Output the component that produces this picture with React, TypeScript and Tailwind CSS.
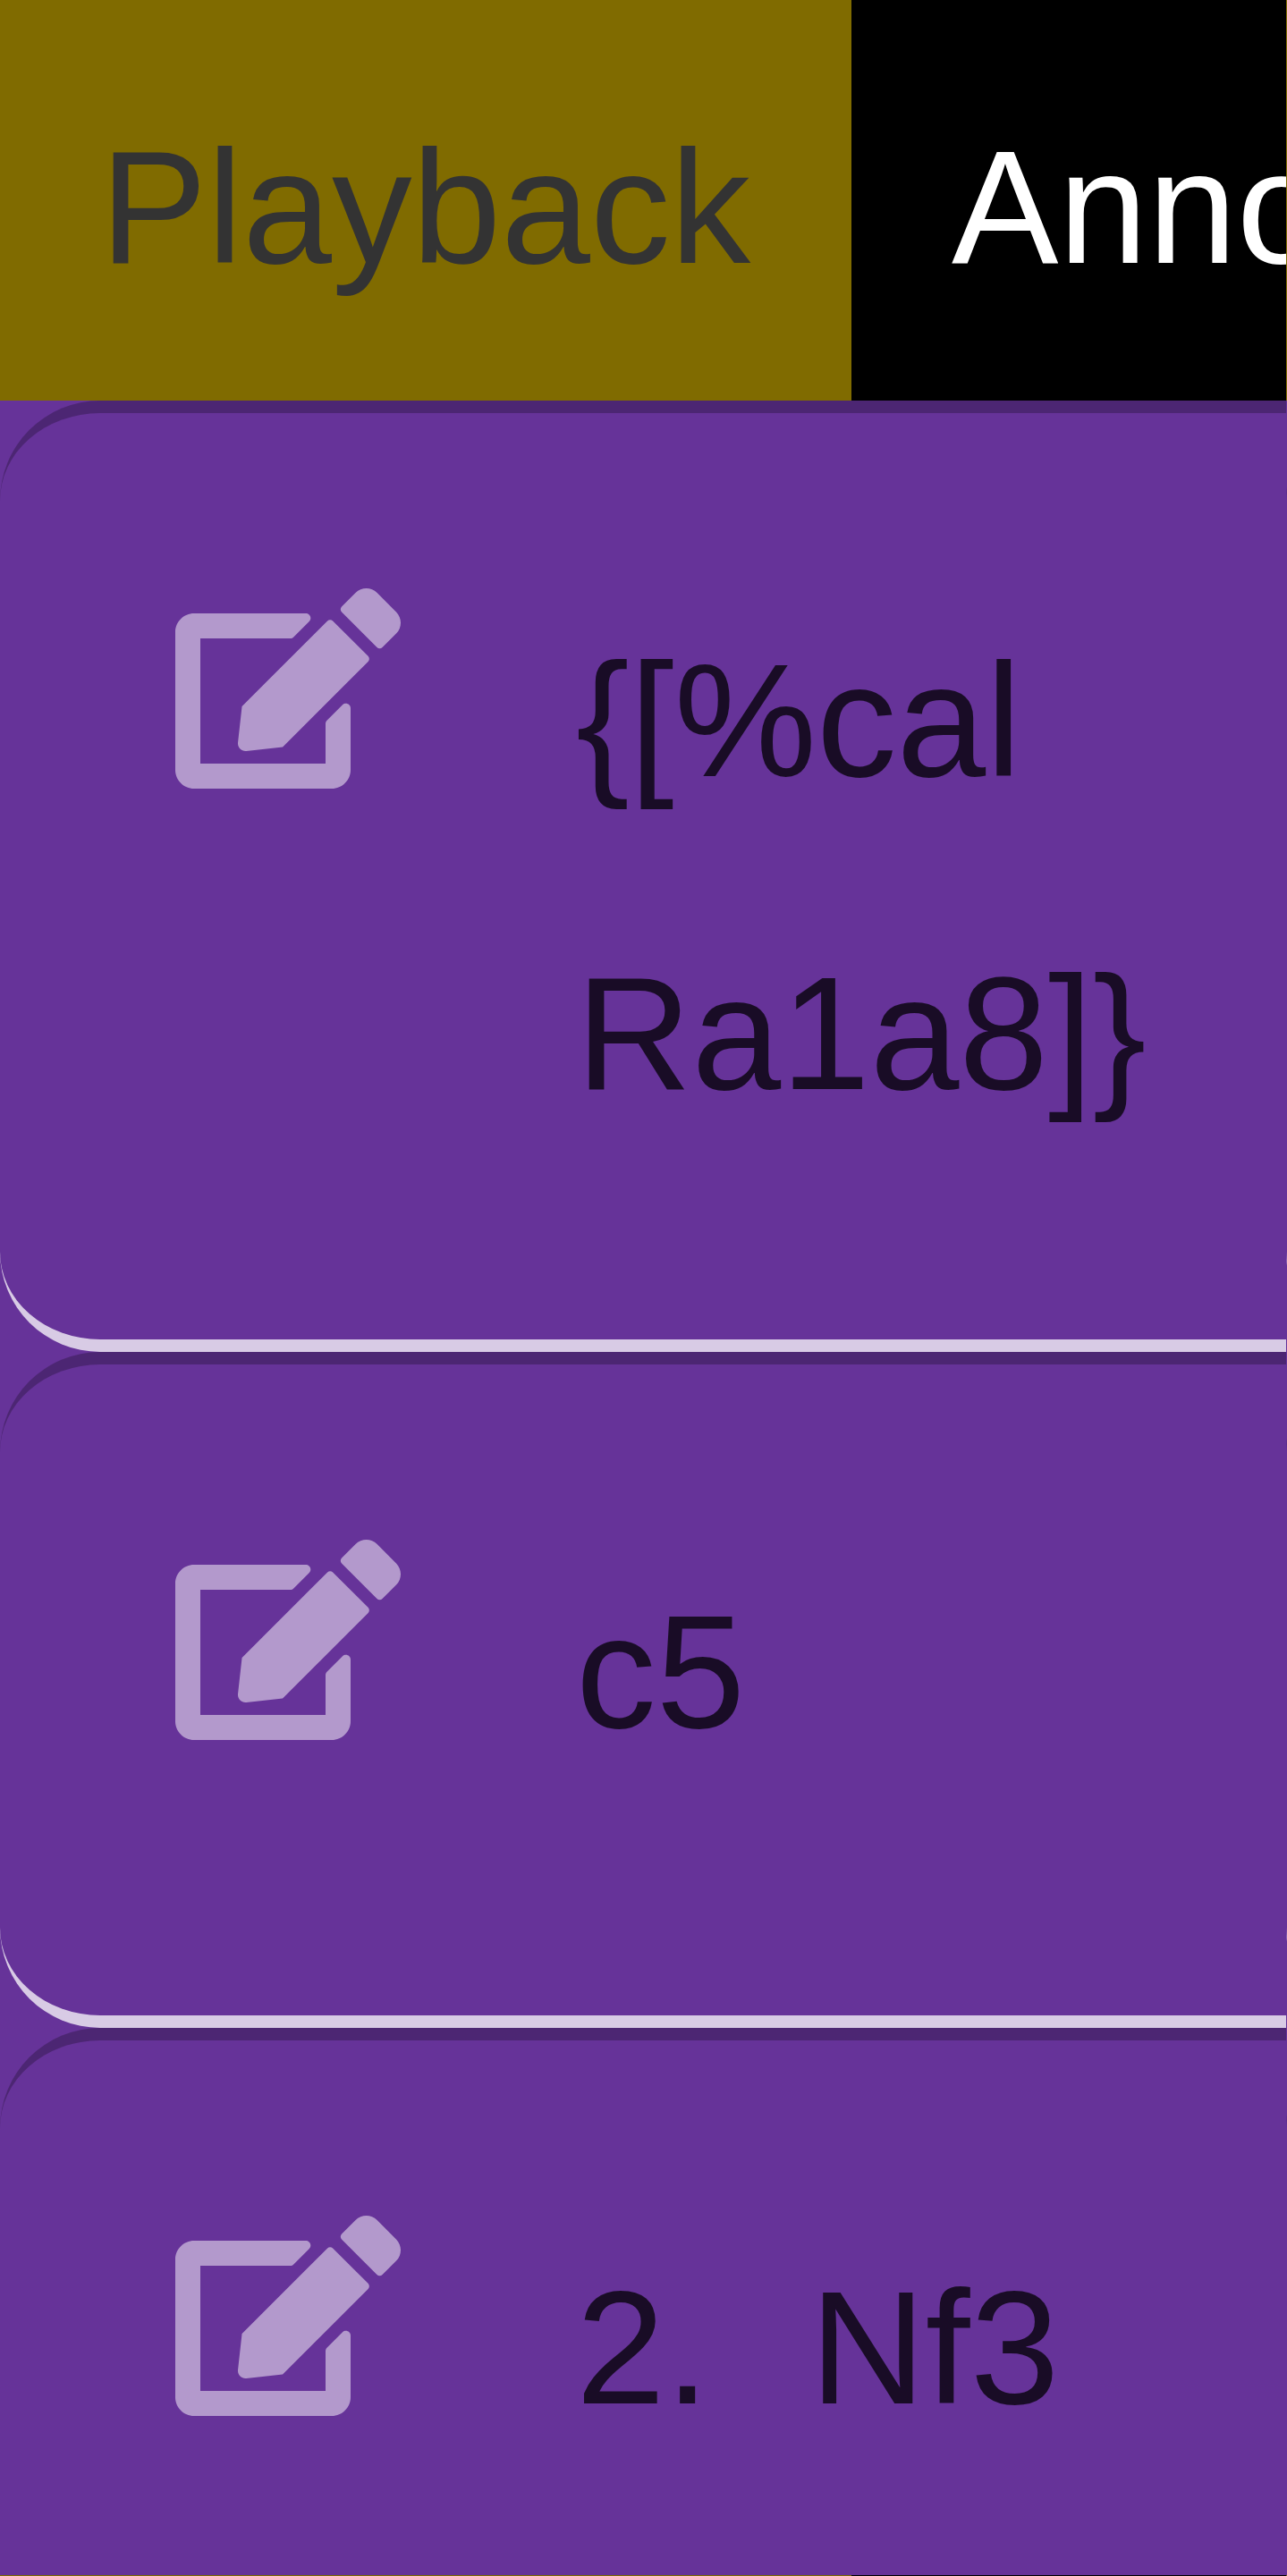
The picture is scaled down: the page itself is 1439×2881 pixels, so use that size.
import { FaEdit } from "react-icons/fa";
import type { ReactNode } from "react";

function Row({ height, children }: { height: string; children?: ReactNode }) {
  return (
    <div
      className={`${height} flex shrink-0 items-start rounded-l-[112px] border-y-[14px] border-t-black/25 border-b-white/75 pt-[168px]`}
    >
      {children}
    </div>
  );
}

function EditButton() {
  return (
    <button className="mt-7 shrink-0 px-[196px] text-white/50" aria-label="Edit">
      <FaEdit className="h-[224px] w-[252px]" />
    </button>
  );
}

function Token({ children }: { children: ReactNode }) {
  return <div className="mt-px text-[179.2px] leading-[350px] whitespace-nowrap text-black/75">{children}</div>;
}

export default function App() {
  return (
    <div className="h-[2881px] w-[1439px] overflow-hidden font-['Liberation_Sans',sans-serif]">
      <div className="flex h-[2880px] overflow-hidden">
        <main className="flex w-[1438px] shrink-0 flex-col overflow-hidden bg-[#663399]">
          <nav className="flex h-[448px] shrink-0 text-[179.2px] leading-[464px] whitespace-nowrap">
            <div className="h-full w-[952px] shrink-0 bg-[#806b00] pl-[112px] text-[#333333]">Playback</div>
            <div className="h-full w-[486px] shrink-0 overflow-hidden bg-black pl-[112px] text-white">Anno</div>
          </nav>
          <Row height="h-[1064px]">
            <EditButton />
            <Token>
              {"{[%cal"}
              <br />
              {"Ra1a8]}"}
            </Token>
          </Row>
          <Row height="h-[756px]">
            <EditButton />
            <Token>c5</Token>
          </Row>
          <Row height="h-[756px]">
            <EditButton />
            <Token>
              <span className="mr-[112px]">2.</span>
              <span>Nf3</span>
            </Token>
          </Row>
        </main>
        <aside className="flex w-px shrink-0 flex-col overflow-hidden bg-[#663399]">
          <div className="h-[448px] shrink-0 bg-[#806b00]" />
          <div className="flex w-[400px] flex-col">
            <Row height="h-[1064px]" />
            <Row height="h-[756px]" />
            <Row height="h-[756px]" />
          </div>
        </aside>
      </div>
      <footer className="flex h-px bg-[#806b00]">
        <div className="ml-[952px] h-px w-[486px] bg-black" />
      </footer>
    </div>
  );
}
